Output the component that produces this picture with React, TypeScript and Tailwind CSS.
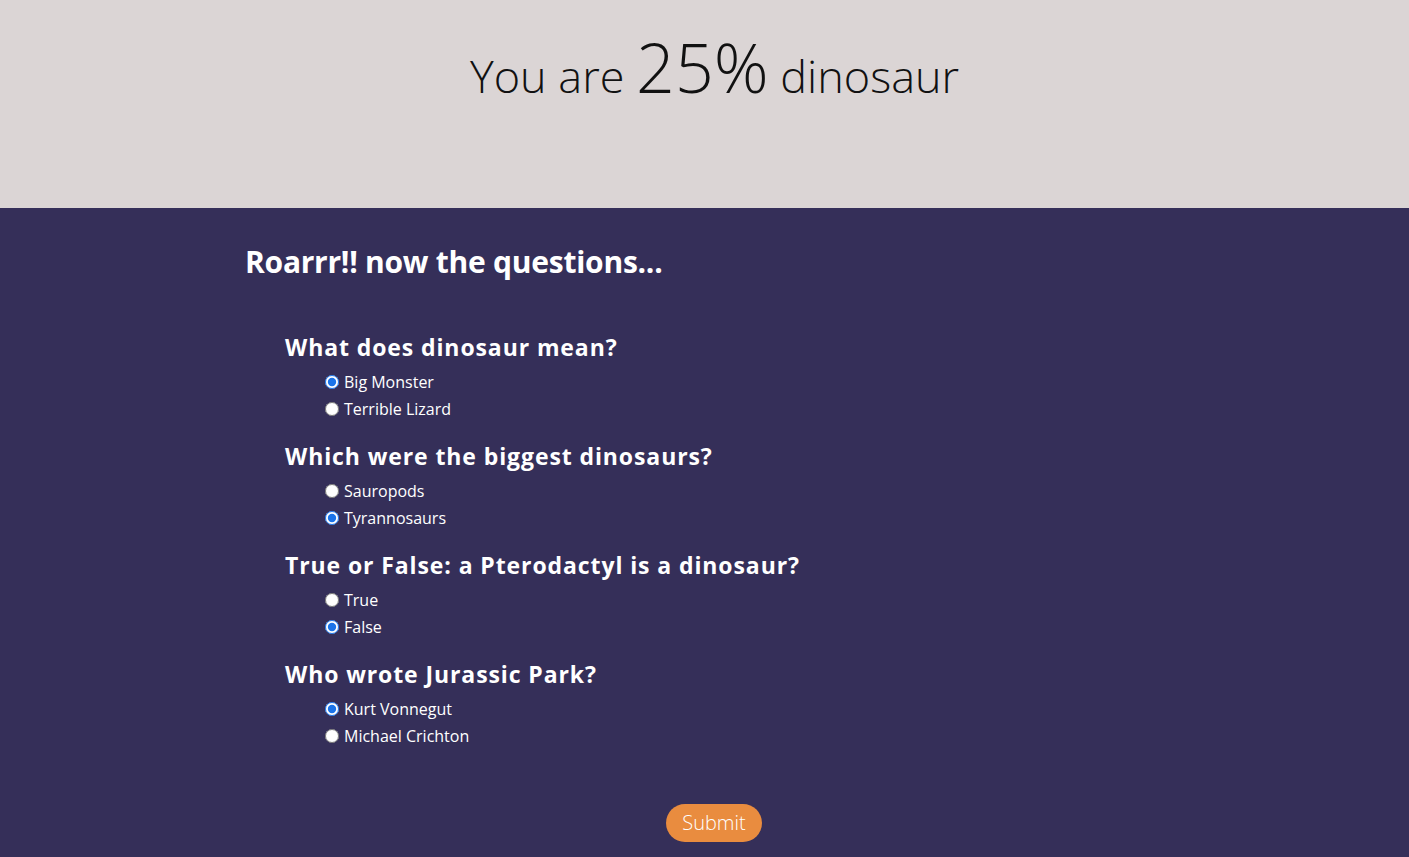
import { useState } from 'react';

const QUESTIONS = [
  {
    id: 'meaning',
    text: 'What does dinosaur mean?',
    options: ['Big Monster', 'Terrible Lizard'],
    picked: 'Big Monster',
  },
  {
    id: 'biggest',
    text: 'Which were the biggest dinosaurs?',
    options: ['Sauropods', 'Tyrannosaurs'],
    picked: 'Tyrannosaurs',
  },
  {
    id: 'ptero',
    text: 'True or False: a Pterodactyl is a dinosaur?',
    options: ['True', 'False'],
    picked: 'False',
  },
  {
    id: 'author',
    text: 'Who wrote Jurassic Park?',
    options: ['Kurt Vonnegut', 'Michael Crichton'],
    picked: 'Kurt Vonnegut',
  },
];

export default function App() {
  const [answers, setAnswers] = useState<Record<string, string>>(
    Object.fromEntries(QUESTIONS.map((q) => [q.id, q.picked])),
  );

  return (
    <div className="min-h-screen bg-[#352f59] font-['Open_Sans',sans-serif]">
      <header className="flex h-[208px] justify-center bg-[#dbd5d5] pl-[20px] pt-[33px]">
        <h1 className="flex items-baseline h-[70px] text-[45px] font-light text-[#111]">
          <span>You are&nbsp;</span>
          <span className="text-[68px] leading-none">25%</span>
          <span>&nbsp;dinosaur</span>
        </h1>
      </header>

      <main className="pl-[245px] pt-[34px] pb-[15px]">
        <div className="w-[938px]">
          <h2 className="text-[30px] font-bold leading-[40px] tracking-[-0.25px] text-white">
            Roarrr!! now the questions...
          </h2>

          <form className="mt-[50px] pl-[40px]" onSubmit={(e) => e.preventDefault()}>
            {QUESTIONS.map((q) => (
              <fieldset key={q.id} className="mb-[19px]">
                <legend className="text-[23px] font-bold leading-[30px] tracking-[0.9px] text-white">
                  {q.text}
                </legend>
                <div className="mt-[6px] pl-[40px]">
                  {q.options.map((opt) => (
                    <label
                      key={opt}
                      className="flex h-[27px] items-center gap-[5px] text-[16px] text-white"
                    >
                      <input
                        type="radio"
                        name={q.id}
                        checked={answers[q.id] === opt}
                        onChange={() => setAnswers({ ...answers, [q.id]: opt })}
                        className="m-0 h-[14px] w-[14px] accent-[#1a73e8]"
                      />
                      {opt}
                    </label>
                  ))}
                </div>
              </fieldset>
            ))}

            <div className="mt-[55px] flex justify-center pr-[40px]">
              <button
                type="submit"
                className="h-[38px] w-[96px] rounded-full bg-[#e98c3f] text-[20px] font-light text-white"
              >
                Submit
              </button>
            </div>
          </form>
        </div>
      </main>
    </div>
  );
}
